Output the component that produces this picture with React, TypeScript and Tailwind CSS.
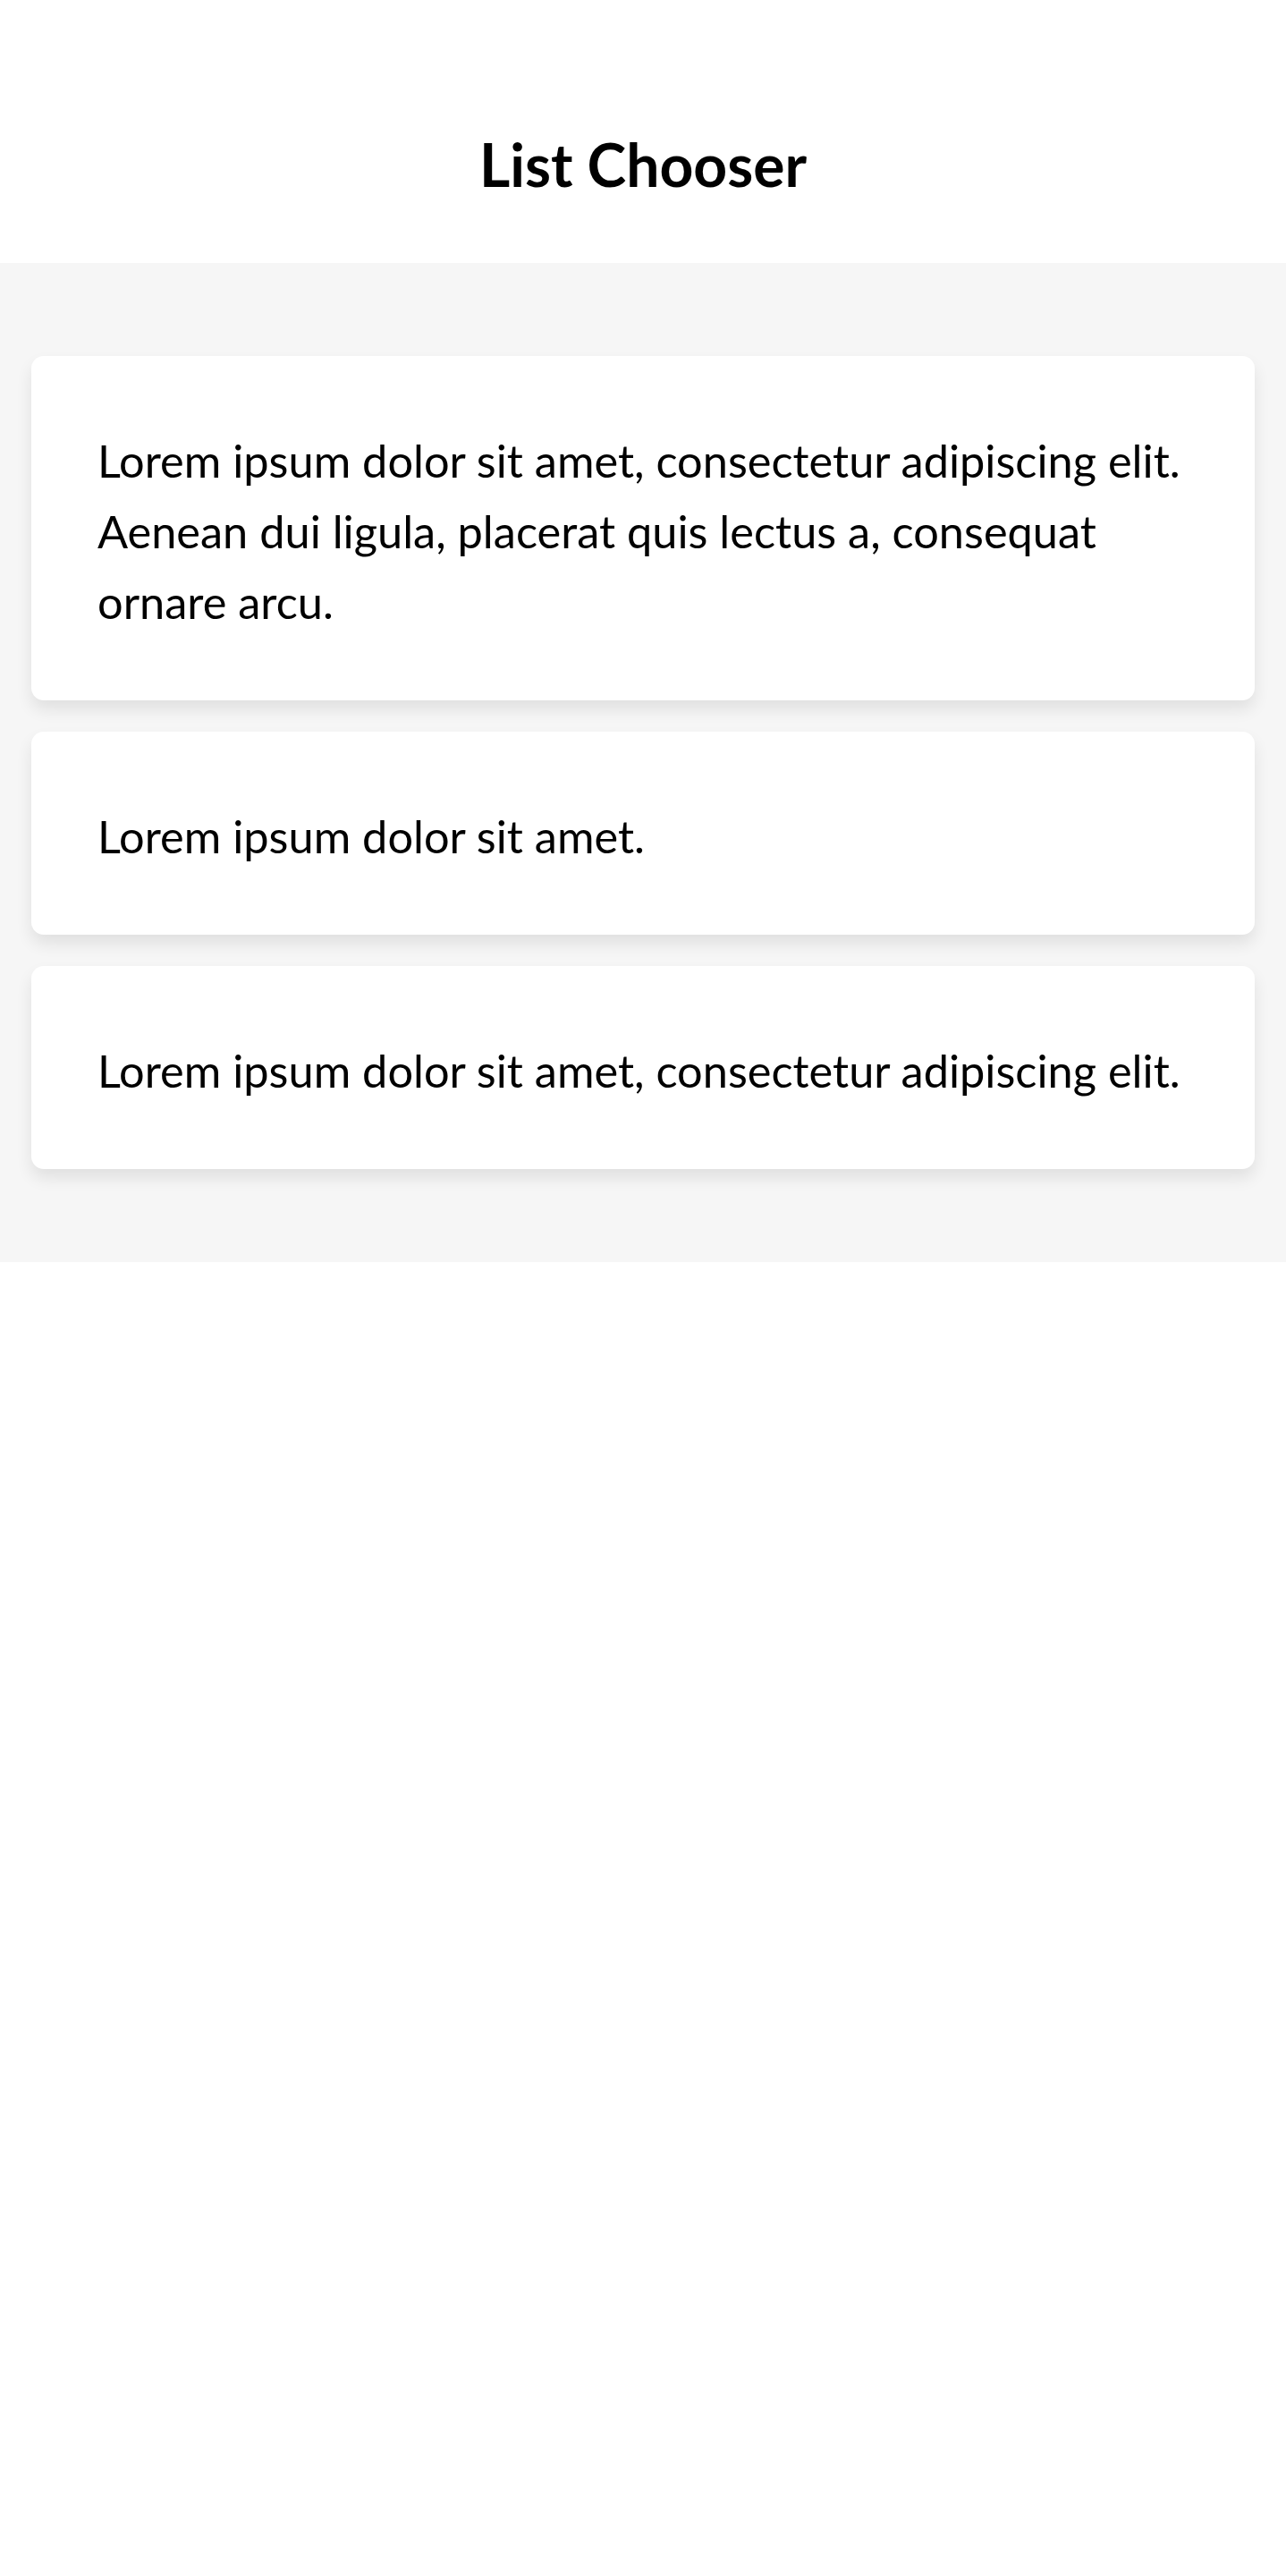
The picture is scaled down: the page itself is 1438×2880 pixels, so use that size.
const items = [
  "Lorem ipsum dolor sit amet, consectetur adipiscing elit. Aenean dui ligula, placerat quis lectus a, consequat ornare arcu.",
  "Lorem ipsum dolor sit amet.",
  "Lorem ipsum dolor sit amet, consectetur adipiscing elit.",
];

export default function App() {
  return (
    <div className="min-h-screen bg-white font-['Lato',sans-serif] text-black">
      {/* Header */}
      <header className="flex h-[294px] items-start justify-center bg-white pt-[146px]">
        <h1 className="text-[66px] font-bold leading-[76px]">List Chooser</h1>
      </header>

      {/* List */}
      <main className="flex flex-col gap-[35px] bg-[#f6f6f6] px-[35px] py-[104px]">
        {items.map((text, i) => (
          <div
            key={i}
            className="rounded-[14px] bg-white px-[74px] pt-[77px] pb-[71px] shadow-[0_10px_18px_rgba(0,0,0,0.09)]"
          >
            <p className="text-[50.5px] leading-[79px]">{text}</p>
          </div>
        ))}
      </main>
    </div>
  );
}
